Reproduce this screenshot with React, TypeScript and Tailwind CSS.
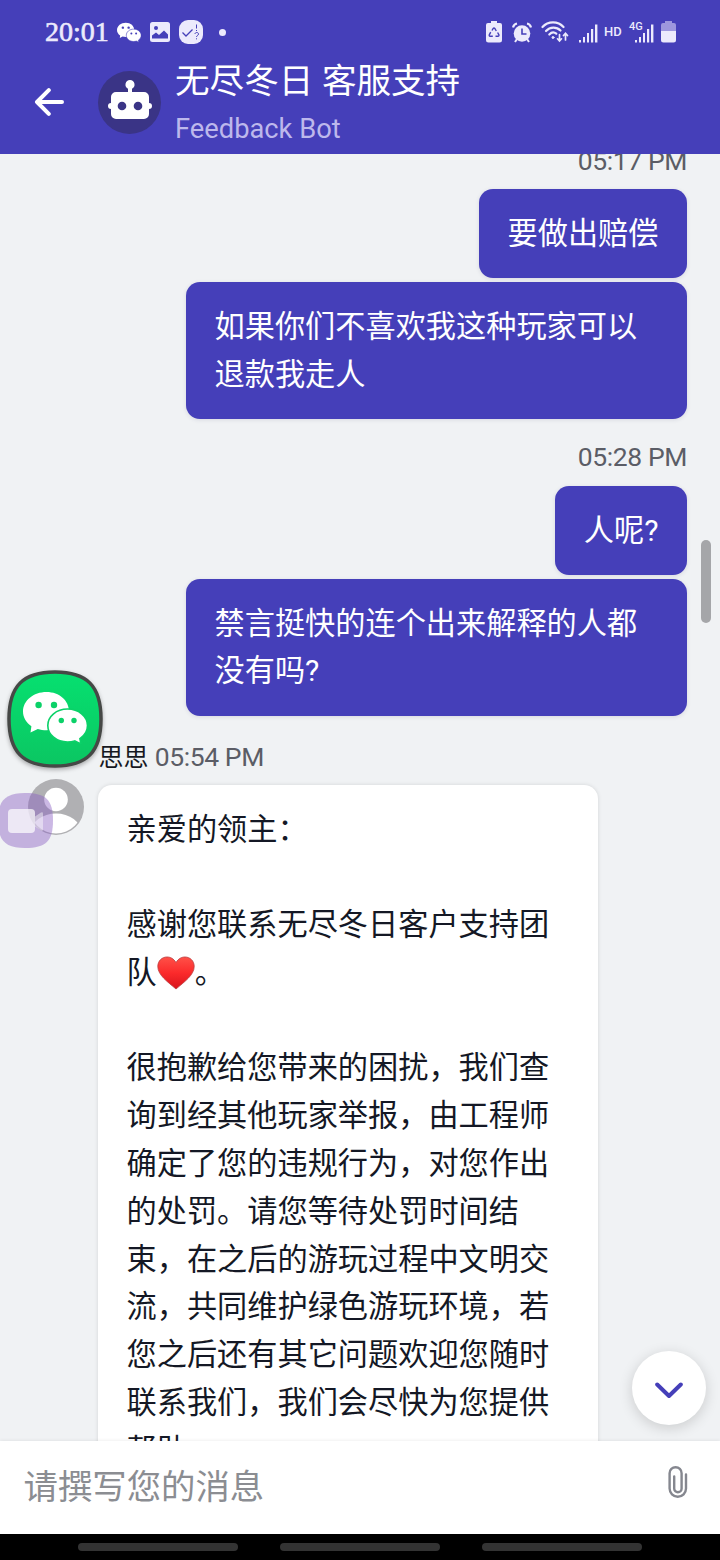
import type { ReactNode } from 'react';
import { clsx } from 'clsx';

const REPLY = [
  '很抱歉给您带来的困扰，我们查询到经其他玩家举报，由工程师确定了您的违规行为，对您作出的处罚。请您等待处罚时间结束，在之后的游玩过程中文明交流，共同维护绿色游玩环境，若您之后还有其它问题欢迎您随时联系我们，我们会尽快为您提供帮助。',
];

// Two chat balloons; the hairline between them takes the colour passed as gap
function WeChatGlyph({ className, eyes, gap }: { className?: string; eyes: string; gap: string }) {
  return (
    <svg viewBox="0 0 64 52" className={className}>
      <path fill="#fff" d="M23.500 0C10.500 0 0 8.600 0 19.500c0 6 3.200 11.200 8.400 14.800L7.500 40.500l7.300-3.600c2.700.9 5.600 1.300 8.700 1.300 13 0 22.500-7.800 22.500-18.700S36.500 0 23.500 0z" />
      <path fill="#fff" stroke={gap} strokeWidth="1.600" d="M44.500 17C33.500 17 24.800 24.300 24.800 33.500s8.700 16.500 19.700 16.500c2.600 0 5-.4 7.200-1.100l6.200 3-1-5.300c4.600-3 7.600-7.600 7.600-13.100C64.500 24.300 55.500 17 44.500 17z" />
      <circle cx="15.600" cy="13" r="3.200" fill={eyes} />
      <circle cx="31" cy="13" r="3.200" fill={eyes} />
      <circle cx="38.300" cy="28.500" r="2.700" fill={eyes} />
      <circle cx="51" cy="28.500" r="2.700" fill={eyes} />
    </svg>
  );
}

function SignalBars({ className }: { className?: string }) {
  return (
    <svg viewBox="0 0 20 19" fill="#eceafc" className={className}>
      <rect x="0" y="16" width="2" height="2.500" />
      <rect x="4" y="13" width="2" height="5.500" />
      <rect x="8" y="9" width="2" height="9.500" />
      <rect x="12" y="5" width="2.200" height="13.500" />
      <rect x="16" y="0.500" width="2.400" height="18" />
    </svg>
  );
}

function StatusBar() {
  return (
    <div className="flex h-16 items-center justify-between pl-[45px] pr-[44px] text-[#eceafc]">
      <div className="flex items-center">
        <span className="w-[72px] font-['Liberation_Serif',serif] text-[28px] leading-none [-webkit-text-stroke:0.6px_#eceafc]">20:01</span>
        <WeChatGlyph className="h-[21px] w-6" eyes="#453fb9" gap="#453fb9" />
        <svg viewBox="0 0 20 20" className="ml-[9px] h-5 w-5">
          <rect width="20" height="20" rx="2.500" fill="#eceafc" />
          <circle cx="6" cy="6" r="2" fill="#453fb9" />
          <path d="M2 16.500v-3l4-3 3 2.500 5-4.500 4 4v4z" fill="#453fb9" />
        </svg>
        <svg viewBox="0 0 24 24" className="ml-[9px] h-6 w-6" fill="none" stroke="#453fb9">
          <rect width="24" height="24" rx="9" fill="#eceafc" stroke="none" />
          <path d="M3.500 12.500l3.500 3.500 6.500-6.500" strokeWidth="1.300" />
          <path d="M17.500 4.500v4M17.500 10v1M16 14c0-2 3.500-2 3.500 0 0 1.500-2 1.500-2 3M17.500 18.300v1" strokeWidth="1" />
        </svg>
        <div className="ml-4 h-[7px] w-[7px] rounded-full bg-[#eceafc]" />
      </div>
      <div className="flex items-center">
        <svg viewBox="0 0 16 22" className="h-[22px] w-4">
          <path fill="#eceafc" d="M5 0h6v2h3a2 2 0 0 1 2 2v15a2.500 2.500 0 0 1-2.500 2.500h-11A2.500 2.500 0 0 1 0 19V4a2 2 0 0 1 2-2h3z" />
          <path d="M6 9.500L7.200 7.500q.8-1 1.600 0L10.300 10M11.600 11.500l1.300 2.300q.3 1.400-1 1.500H9.500M6.800 15.300H4.200q-1.300-.3-.9-1.500l1.400-2.600" fill="none" stroke="#453fb9" strokeWidth="1.400" />
        </svg>
        <svg viewBox="0 0 20 21" className="ml-[10px] h-[21px] w-5" fill="none" stroke="#eceafc">
          <circle cx="10" cy="11.500" r="8.300" fill="#eceafc" stroke="none" />
          <path d="M1 5.500c.5-2 2-3.600 4-4M19 5.500c-.5-2-2-3.600-4-4" strokeWidth="2.200" />
          <path d="M5 17l-2 3M15 17l2 3" strokeWidth="2" />
          <path d="M10 6.500v5.500h4.500" stroke="#453fb9" strokeWidth="1.600" />
        </svg>
        <svg viewBox="0 0 28 22" className="ml-[9px] h-[22px] w-7" fill="none" stroke="#eceafc" strokeWidth="2.200" strokeLinecap="round">
          <path d="M1.500 6C7-.2 17-.2 22.500 6" />
          <path d="M5 10c4-4.500 10.500-4.500 14.500-.5" />
          <path d="M8.300 13.500c2.200-2.300 5-2.400 7-.8" />
          <circle cx="12" cy="16.500" r="1" fill="#eceafc" strokeWidth="1" />
          <path d="M18.500 13.500v6M16.500 17.800l2 2.200 2-2.200M24.500 19v-6M22.500 14.500l2-2.200 2 2.200" strokeWidth="1.700" />
        </svg>
        <SignalBars className="ml-[10px] mt-[2px] h-[19px] w-5" />
        <span className="-mt-px ml-[5px] w-[19px] font-[Roboto,sans-serif] text-[13px] font-medium leading-none">HD</span>
        <div className="relative ml-[12px] mt-[2px]">
          <SignalBars className="h-[19px] w-5" />
          <span className="absolute -left-[6px] -top-[3px] bg-[#453fb9] font-[Roboto,sans-serif] text-[11px] font-medium leading-[11px]">4G</span>
        </div>
        <svg viewBox="0 0 15 22" className="ml-[6px] h-[22px] w-[15px]">
          <path fill="#9d97de" d="M4 0h7v2h2a2 2 0 0 1 2 2v7H0V4a2 2 0 0 1 2-2h2z" />
          <path fill="#eceafc" d="M0 10h15v9a2.500 2.500 0 0 1-2.500 2.500h-10A2.500 2.500 0 0 1 0 19z" />
        </svg>
      </div>
    </div>
  );
}

function Header() {
  return (
    <header className="h-[154px] shrink-0 bg-[#453fb9]">
      <StatusBar />
      <div className="-mt-[3px] flex items-center pl-[34px]">
        <svg viewBox="0 0 31 28" className="-mt-1 h-7 w-[31px]" fill="none" stroke="#fff" strokeWidth="4" strokeLinecap="round" strokeLinejoin="round">
          <path d="M28 14H3M14.800 2.200L3 14l11.800 11.800" />
        </svg>
        <div className="-mt-[4px] ml-[33px] flex h-[63px] w-[63px] items-center justify-center rounded-full bg-[#3a3486]">
          <svg viewBox="0 0 46 40" className="-mt-[5px] h-10 w-[46px]">
            <path fill="#fff" d="M23 0a4.600 4.600 0 0 1 2 8.700V12h12a5 5 0 0 1 5 5v6a3 3 0 0 1 0 6v5a5 5 0 0 1-5 5H9a5 5 0 0 1-5-5v-5a3 3 0 0 1 0-6v-6a5 5 0 0 1 5-5h12V8.700A4.600 4.600 0 0 1 23 0z" />
            <circle cx="15" cy="26" r="4.300" fill="#3a3486" />
            <circle cx="31" cy="26" r="4.300" fill="#3a3486" />
          </svg>
        </div>
        <div className="-mt-1 ml-[14px]">
          <div className="h-[48px] text-[34.600px] leading-[48px] text-white">无尽冬日 客服支持</div>
          <div className="h-[42px] text-[27.300px] leading-[48px] text-[#bdb8ec]">Feedback Bot</div>
        </div>
      </div>
    </header>
  );
}

function TimeLabel({ children }: { children: ReactNode }) {
  return <div className="h-[66.500px] self-end text-[26.500px] leading-[75px] tracking-[-0.4px] text-[#5b5d66]">{children}</div>;
}

function Bubble({ children, last }: { children: ReactNode; last?: boolean }) {
  return (
    <div
      className={clsx(
        'max-w-[501px] self-end rounded-[14px] bg-[#453fb9] px-[28.500px] pt-[21px] pb-[20.700px] text-[30.200px] leading-[47.800px] text-white shadow-[0_1px_4px_rgba(40,40,90,0.12)]',
        !last && 'mb-[3.400px]',
      )}
    >
      {children}
    </div>
  );
}

function Heart() {
  return (
    <svg viewBox="0 0 38 34" className="inline-block h-[34px] w-[38px] align-[-7px]">
      <defs>
        <linearGradient id="heart" x1="0" y1="0" x2="0" y2="1">
          <stop offset="0" stopColor="#ff5148" />
          <stop offset="0.500" stopColor="#fb2a2b" />
          <stop offset="1" stopColor="#d8141c" />
        </linearGradient>
      </defs>
      <path fill="url(#heart)" stroke="#b93a3c" strokeWidth="0.800" d="M19 6.500C16.500 2.500 13.500 1 10 1 4.800 1 .8 5 .8 10.500c0 8.500 10 15.500 18.200 22.500 8.200-7 18.200-14 18.200-22.500C37.200 5 33.200 1 28 1c-3.500 0-6.500 1.500-9 5.500z" />
    </svg>
  );
}

function AgentMessage() {
  return (
    <div>
      <div className="h-[69.200px] pl-[98.500px] text-[26.500px] leading-[81px] tracking-[-0.4px] text-[#5b5d66]">
        <span className="text-[25px] tracking-normal text-[#16181f]">思思</span> 05:54 PM
      </div>
      <div className="flex items-start gap-[14px] pl-7">
        <svg viewBox="0 0 56 56" className="-mt-[6px] h-14 w-14">
          <defs>
            <clipPath id="avatar">
              <circle cx="28" cy="28" r="26.500" />
            </clipPath>
          </defs>
          <circle cx="28" cy="28" r="28" fill="#b0b0b3" />
          <circle cx="28" cy="20.500" r="11.800" fill="#fff" />
          <ellipse cx="28" cy="53" rx="25" ry="18.500" fill="#fff" clipPath="url(#avatar)" />
        </svg>
        <div className="w-[500px] rounded-[14px] bg-white px-[28.500px] py-[21px] text-[30.200px] leading-[47.800px] text-[#141825] shadow-[0_0_4px_rgba(0,0,0,0.12)]">
          <p>亲爱的领主：</p>
          <p className="mt-[47.500px]">
            感谢您联系无尽冬日客户支持团队
            <Heart />
            <span className="tracking-[-1px]">。</span>
          </p>
          {REPLY.map((text) => (
            <p key={text} className="mt-[47.500px]">{text}</p>
          ))}
        </div>
      </div>
    </div>
  );
}

function FloatingApps() {
  return (
    <>
      <svg viewBox="0 0 53 55" className="absolute left-0 top-[793px] h-[55px] w-[53px]">
        <path fill="#8b62c4" fillOpacity="0.450" d="M25 0c21 0 28 7 28 27.500S46 55 25 55C11 55 3 51 0 42V13C3 4 11 0 25 0z" />
        <path fill="#fff" fillOpacity="0.700" d="M12 16h19a4 4 0 0 1 4 4v16a4 4 0 0 1-4 4H12a4 4 0 0 1-4-4V20a4 4 0 0 1 4-4z" />
        <path fill="#fff" fillOpacity="0.450" d="M35 23.500l6-4q2-1 2 1v16q0 2-2 1l-6-4z" />
      </svg>
      <div className="absolute left-[7px] top-[670px] h-[98px] w-[96px] drop-shadow-[0_2px_2px_rgba(0,0,0,0.3)]">
        <svg viewBox="0 0 96 98" className="h-[98px] w-[96px]">
          <defs>
            <linearGradient id="tile" x1="0" y1="0" x2="0" y2="1">
              <stop offset="0" stopColor="#06e070" />
              <stop offset="1" stopColor="#0bc662" />
            </linearGradient>
          </defs>
          <path fill="url(#tile)" stroke="#464846" strokeWidth="3.500" d="M48 2C80 2 94 16 94 49S80 96 48 96 2 82 2 49 16 2 48 2z" />
        </svg>
        <WeChatGlyph className="absolute left-[16px] top-[22px] h-[52px] w-16" eyes="#0bd168" gap="#0bd168" />
      </div>
    </>
  );
}

function Composer() {
  return (
    <div className="flex h-[93px] shrink-0 items-center justify-between bg-white pl-[23.500px] pr-[32px] shadow-[0_-1px_3px_rgba(0,0,0,0.06)]">
      <span className="-mt-[2px] text-[34.400px] leading-[48px] text-[#8b8d92]">请撰写您的消息</span>
      <svg viewBox="0 0 20 32" className="-mt-[12px] h-8 w-5" fill="none" stroke="#85878f" strokeWidth="2.400" strokeLinecap="round">
        <path d="M18 8.500V22.500a8.200 8.200 0 0 1-16.400 0V7.200a6 6 0 0 1 12 0V22.500a3.700 3.700 0 0 1-7.400 0V10.500" />
      </svg>
    </div>
  );
}

export default function App() {
  return (
    <div className="relative flex h-[1560px] w-[720px] flex-col overflow-hidden bg-[#f0f2f4] font-[Roboto,'Noto_Sans_CJK_SC',sans-serif]">
      <Header />
      <main className="min-h-0 flex-1 overflow-hidden">
        <div className="-mt-[31.500px] flex flex-col pr-[33px]">
          <TimeLabel>05:17 PM</TimeLabel>
          <Bubble>要做出赔偿</Bubble>
          <Bubble last>如果你们不喜欢我这种玩家可以退款我走人</Bubble>
          <TimeLabel>05:28 PM</TimeLabel>
          <Bubble>人呢?</Bubble>
          <Bubble last>禁言挺快的连个出来解释的人都没有吗?</Bubble>
          <AgentMessage />
        </div>
      </main>
      <div className="z-10">
        <Composer />
      </div>
      <div className="z-10 flex h-[26px] shrink-0 items-center justify-center gap-[42px] bg-black">
        <div className="h-2 w-40 rounded-full bg-[#333]" />
        <div className="h-2 w-40 rounded-full bg-[#333]" />
        <div className="h-2 w-40 rounded-full bg-[#333]" />
      </div>

      {/* Scroll thumb */}
      <div className="absolute right-[9px] top-[540px] h-[83px] w-[10px] rounded-full bg-[#a5a6a9]" />
      <FloatingApps />
      <button className="absolute left-[632px] top-[1351px] flex h-[74px] w-[74px] items-center justify-center rounded-full bg-white shadow-[0_3px_14px_rgba(0,0,0,0.16)]">
        <svg viewBox="0 0 28 17" className="mt-1 h-[17px] w-7" fill="none" stroke="#453fb9" strokeWidth="4" strokeLinecap="round" strokeLinejoin="round">
          <path d="M2.200 2.500L14 14 25.800 2.500" />
        </svg>
      </button>
    </div>
  );
}
